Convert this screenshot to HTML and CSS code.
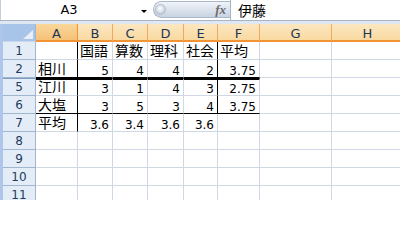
FILE: index.html
```html
<!DOCTYPE html>
<html lang="ja">
<head>
<meta charset="utf-8">
<link rel="stylesheet" href="styles.css">
</head>
<body>
<div class="app">
  <div class="fbar">
    <div class="namebox"><span class="ref">A3</span><span class="dd"></span></div>
    <div class="pill"><span class="knob"></span><span class="fx">fx</span></div>
    <div class="formula">伊藤</div>
  </div>
  <div class="band"></div>
  <div class="sheet">
    <div class="corner"><span class="tri"></span></div>
    <div class="ch act">A</div><div class="ch">B</div><div class="ch">C</div><div class="ch">D</div><div class="ch">E</div><div class="ch">F</div><div class="ch">G</div><div class="ch">H</div>

    <div class="rh">1</div>
    <div class="c bR"></div><div class="c j">国語</div><div class="c j">算数</div><div class="c j">理科</div><div class="c j bR">社会</div><div class="c j">平均</div><div class="c"></div><div class="c"></div>

    <div class="rh">2</div>
    <div class="c j bR bB">相川</div><div class="c r bB">5</div><div class="c r bB">4</div><div class="c r bB">4</div><div class="c r bR bB">2</div><div class="c r bB">3.75</div><div class="c"></div><div class="c"></div>

    <div class="rh hid">5</div>
    <div class="c j bR t2">江川</div><div class="c r t2">3</div><div class="c r t2">1</div><div class="c r t2">4</div><div class="c r bR t2">3</div><div class="c r t2">2.75</div><div class="c"></div><div class="c"></div>

    <div class="rh">6</div>
    <div class="c j bR bB">大塩</div><div class="c r bB">3</div><div class="c r bB">5</div><div class="c r bB">3</div><div class="c r bR bB">4</div><div class="c r bB">3.75</div><div class="c"></div><div class="c"></div>

    <div class="rh">7</div>
    <div class="c j bR">平均</div><div class="c r">3.6</div><div class="c r">3.4</div><div class="c r">3.6</div><div class="c r">3.6</div><div class="c"></div><div class="c"></div><div class="c"></div>

    <div class="rh">8</div>
    <div class="c"></div><div class="c"></div><div class="c"></div><div class="c"></div><div class="c"></div><div class="c"></div><div class="c"></div><div class="c"></div>
    <div class="rh">9</div>
    <div class="c"></div><div class="c"></div><div class="c"></div><div class="c"></div><div class="c"></div><div class="c"></div><div class="c"></div><div class="c"></div>
    <div class="rh">10</div>
    <div class="c"></div><div class="c"></div><div class="c"></div><div class="c"></div><div class="c"></div><div class="c"></div><div class="c"></div><div class="c"></div>
    <div class="rh">11</div>
    <div class="c"></div><div class="c"></div><div class="c"></div><div class="c"></div><div class="c"></div><div class="c"></div><div class="c"></div><div class="c"></div>
  </div>
</div>
</body>
</html>
```

FILE: styles.css
```css
* { box-sizing: border-box; margin: 0; padding: 0; }
html, body { margin: 0; background: #fff; }
body { width: 400px; height: 200px; overflow: hidden; font-family: "DejaVu Sans", "Noto Sans CJK JP", sans-serif; color: #000; }
.app { width: 400px; height: 200px; overflow: hidden; }

.fbar { display: flex; height: 21px; background: #fff; border-bottom: 1px solid #a7b4c6; }
.namebox { width: 153px; display: flex; align-items: center; border-left: 1px solid #c3cddb; }
.ref { width: 136px; text-align: center; font-size: 13px; line-height: 20px; }
.dd { width: 0; height: 0; border-left: 3px solid transparent; border-right: 3px solid transparent; border-top: 3px solid #000; margin-left: 4px; margin-top: 3px; }
.pill { width: 77px; height: 17px; margin-top: 1px; display: flex; align-items: center; border: 1px solid #a9b8cc; border-right: none; border-radius: 9px 0 0 9px; background: linear-gradient(#f1f4f8, #d9e1ec 55%, #c8d3e2); }
.knob { width: 11px; height: 11px; border-radius: 50%; margin-left: 1px; background: radial-gradient(circle at 45% 40%, #ffffff 0, #e4e9ef 35%, #aab6c5 100%); border: 1px solid #b3becc; }
.fx { margin-left: auto; margin-right: 4px; font-family: "Liberation Serif", serif; font-style: italic; font-weight: bold; font-size: 13px; color: #6d6d6d; }
.formula { flex: 1; border-left: 1px solid #a7b4c6; padding-left: 7px; font-family: "Noto Sans CJK JP", sans-serif; font-size: 14px; line-height: 20px; }

.band { height: 3px; background: #dfe7f2; }

.sheet { display: grid; grid-template-columns: 33px 42px 35px 35px 36px 34px 42px 72px 72px; grid-auto-rows: 18px; border-left: 3px solid #adc6ea; width: 404px; }

.corner { background: #a9c4e9; border-right: 1px solid #9eb6ce; border-bottom: 1px solid #c9d8ee; display: flex; justify-content: flex-end; align-items: flex-end; }
.tri { width: 0; height: 0; border-left: 10px solid transparent; border-bottom: 9px solid #e9eff8; margin: 0 2px 2px 0; }

.ch { display: flex; justify-content: center; align-items: flex-end; font-size: 13px; line-height: 12px; padding-bottom: 0; color: #1c3557; background: linear-gradient(#fce7c2, #f9d9a0); border-right: 1px solid #f1a95f; border-bottom: 2px solid #f29436; }
.ch.act { background: linear-gradient(#f9d69b, #f6c177); border-right-color: #f29436; }

.rh { display: flex; justify-content: center; align-items: flex-end; padding-bottom: 2px; font-size: 12px; line-height: 12px; color: #203d60; background: #e4ecf7; border-right: 1px solid #9eb6ce; border-bottom: 1px solid #9eb6ce; }
.rh.hid { border-top: 1px solid #7f9dc2; }

.c { display: flex; align-items: flex-end; padding: 0 2px; font-size: 12px; line-height: 12px; white-space: nowrap; border-right: 1px solid #d0d7e5; border-bottom: 1px solid #d0d7e5; }
.r { justify-content: flex-end; padding-right: 3px; }
.j { font-family: "Noto Sans CJK JP", sans-serif; font-size: 14px; line-height: 14px; padding-bottom: 2px; }
.bR { border-right-color: #000; }
.bB { border-bottom-color: #000; }
.t2 { border-top: 2px solid #000; }
```
